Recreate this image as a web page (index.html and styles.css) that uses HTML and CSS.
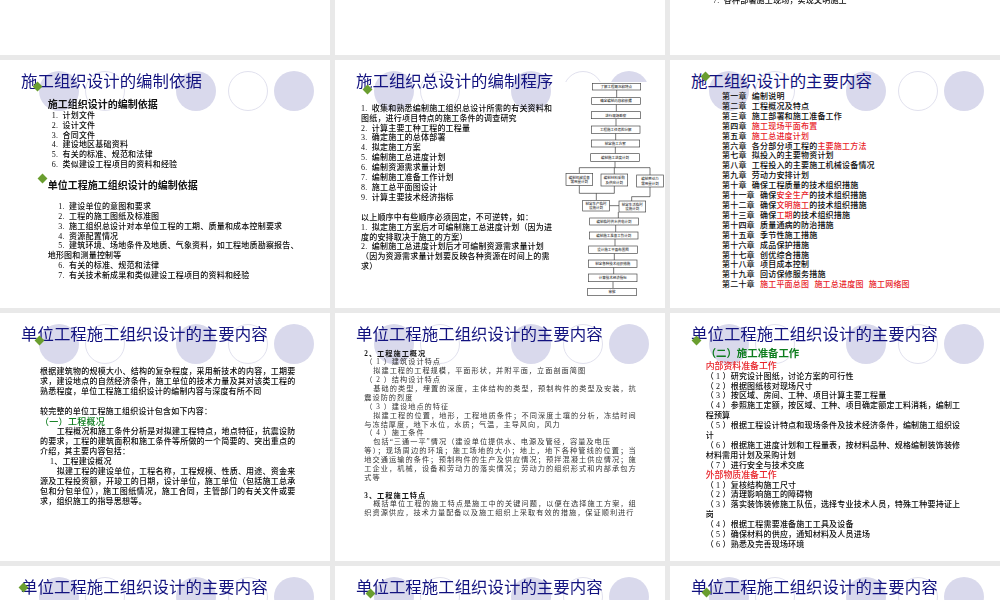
FILE: index.html
```html
<!DOCTYPE html>
<html lang="zh">
<head>
<meta charset="utf-8">
<title>施工组织设计</title>
<link rel="stylesheet" href="styles.css">
</head>
<body>
<main class="deck">
  <section class="slide"></section>
  <section class="slide"></section>
  <section class="slide"><p class="cut">7.&nbsp;&nbsp;各种部署施工现场，实现文明施工</p></section>

  <section class="slide">
    <div class="circles"><i></i><i></i><i></i><i></i><i></i></div>
    <h1>施工组织设计的编制依据</h1>
    <b class="dia d1a"></b><b class="dia d1b"></b>
    <div class="body b1">
      <h2>施工组织设计的编制依据</h2>
      <p class="in4">1.&nbsp;&nbsp;计划文件</p>
      <p class="in4">2.&nbsp;&nbsp;设计文件</p>
      <p class="in4">3.&nbsp;&nbsp;合同文件</p>
      <p class="in4">4.&nbsp;&nbsp;建设地区基础资料</p>
      <p class="in4">5.&nbsp;&nbsp;有关的标准、规范和法律</p>
      <p class="in4">6.&nbsp;&nbsp;类似建设工程项目的资料和经验</p>
      <h2 class="h2b">单位工程施工组织设计的编制依据</h2>
      <div class="list2">
        <p class="in10">1.&nbsp;&nbsp;建设单位的意图和要求</p>
        <p class="in10">2.&nbsp;&nbsp;工程的施工图纸及标准图</p>
        <p class="in10">3.&nbsp;&nbsp;施工组织总设计对本单位工程的工期、质量和成本控制要求</p>
        <p class="in10">4.&nbsp;&nbsp;资源配置情况</p>
        <p class="in10">5.&nbsp;&nbsp;建筑环境、场地条件及地质、气象资料，如工程地质勘察报告、地形图和测量控制等</p>
        <p class="in10">6.&nbsp;&nbsp;有关的标准、规范和法律</p>
        <p class="in10">7.&nbsp;&nbsp;有关技术新成果和类似建设工程项目的资料和经验</p>
      </div>
    </div>
  </section>

  <section class="slide">
    <div class="circles"><i></i><i></i><i></i><i></i><i></i></div>
    <h1>施工组织总设计的编制程序</h1>
    <b class="dia d2"></b>
    <div class="body b2">
      <p>1.&nbsp;&nbsp;收集和熟悉编制施工组织总设计所需的有关资料和图纸，进行项目特点的施工条件的调查研究</p>
      <p>2.&nbsp;&nbsp;计算主要工种工程的工程量</p>
      <p>3.&nbsp;&nbsp;确定施工的总体部署</p>
      <p>4.&nbsp;&nbsp;拟定施工方案</p>
      <p>5.&nbsp;&nbsp;编制施工总进度计划</p>
      <p>6.&nbsp;&nbsp;编制资源需求量计划</p>
      <p>7.&nbsp;&nbsp;编制施工准备工作计划</p>
      <p>8.&nbsp;&nbsp;施工总平面图设计</p>
      <p>9.&nbsp;&nbsp;计算主要技术经济指标</p>
      <p class="gap">以上顺序中有些顺序必须固定，不可逆转，如：</p>
      <p>1.&nbsp;&nbsp;拟定施工方案后才可编制施工总进度计划（因为进度的安排取决于施工的方案）</p>
      <p>2.&nbsp;&nbsp;编制施工总进度计划后才可编制资源需求量计划（因为资源需求量计划要反映各种资源在时间上的需求）</p>
    </div>
    <svg class="chart" viewBox="684 246 306 660" aria-label="编制程序流程图">
      <rect class="bg" x="684" y="246" width="306" height="660"/>
      <path class="ln" d="M845 270V293M844 313V335M843 356V378M842 400V420M841 441V461M840 484V503M733 520V503H945V525M838 503V522M733 556V580H838V558M784 580V601M945 561V590H890V603M823 617H852M850 636V654M842 675V696M840 717V738M838 760V780M836 802V822M834 845V865"/>
      <rect class="box" x="772" y="250" width="145" height="20"/>
      <rect class="box" x="770" y="293" width="146" height="20"/>
      <rect class="box" x="769" y="335" width="147" height="21"/>
      <rect class="box" x="769" y="378" width="146" height="22"/>
      <rect class="box" x="769" y="420" width="145" height="21"/>
      <rect class="box" x="767" y="461" width="146" height="23"/>
      <rect class="box" x="693" y="520" width="80" height="36"/>
      <rect class="box" x="798" y="522" width="80" height="36"/>
      <rect class="box" x="905" y="525" width="80" height="36"/>
      <rect class="box" x="743" y="601" width="80" height="32"/>
      <rect class="box" x="852" y="603" width="80" height="33"/>
      <rect class="box" x="764" y="654" width="146" height="21"/>
      <rect class="box" x="763" y="696" width="146" height="21"/>
      <rect class="box" x="761" y="738" width="146" height="22"/>
      <rect class="box" x="760" y="780" width="146" height="22"/>
      <rect class="box" x="760" y="822" width="146" height="23"/>
      <rect class="box" x="758" y="865" width="146" height="22"/>
      <text x="844" y="264">了解工程概况和特点</text>
      <text x="843" y="307">确定编制内容和依据</text>
      <text x="842" y="350">进行现场勘察</text>
      <text x="842" y="393">工程施工任务的分解</text>
      <text x="841" y="435">制定施工方案</text>
      <text x="840" y="477">编制施工进度计划</text>
      <text x="733" y="536">编制机械设备</text><text x="733" y="550">需用量计划</text>
      <text x="838" y="538">编制材料采购</text><text x="838" y="552">及供应计划</text>
      <text x="945" y="541">编制劳动力</text><text x="945" y="555">需用量计划</text>
      <text x="783" y="615">制定生产临时</text><text x="783" y="628">设施计划</text>
      <text x="892" y="617">制定生活临时</text><text x="892" y="630">设施计划</text>
      <text x="837" y="668">编制临时供水供电计划</text>
      <text x="836" y="710">编制施工准备工作计划</text>
      <text x="834" y="753">设计施工平面布置图</text>
      <text x="833" y="795">制定各种技术组织措施</text>
      <text x="833" y="838">计算技术经济指标</text>
      <text x="831" y="880">审批</text>
    </svg>
  </section>

  <section class="slide">
    <div class="circles"><i></i><i></i><i></i><i></i><i></i></div>
    <h1>施工组织设计的主要内容</h1>
    <b class="dia d3"></b>
    <div class="body b3">
      <p>第一章 编制说明</p>
      <p>第二章 工程概况及特点</p>
      <p>第三章 施工部署和施工准备工作</p>
      <p>第四章 <span class="red">施工现场平面布置</span></p>
      <p>第五章 <span class="red">施工总进度计划</span></p>
      <p>第六章 各分部分项工程的<span class="red">主要施工方法</span></p>
      <p>第七章 拟投入的主要物资计划</p>
      <p>第八章 工程投入的主要施工机械设备情况</p>
      <p>第九章 劳动力安排计划</p>
      <p>第十章 确保工程质量的技术组织措施</p>
      <p>第十一章 确保<span class="red">安全生产</span>的技术组织措施</p>
      <p>第十二章 确保<span class="red">文明施工</span>的技术组织措施</p>
      <p>第十三章 确保<span class="red">工期</span>的技术组织措施</p>
      <p>第十四章 质量通病的防治措施</p>
      <p>第十五章 季节性施工措施</p>
      <p>第十六章 成品保护措施</p>
      <p>第十七章 创优综合措施</p>
      <p>第十八章 项目成本控制</p>
      <p>第十九章 回访保修服务措施</p>
      <p>第二十章 <span class="red">施工平面总图 施工总进度图 施工网络图</span></p>
    </div>
  </section>

  <section class="slide">
    <div class="circles"><i></i><i></i><i></i><i></i><i></i></div>
    <h1>单位工程施工组织设计的主要内容</h1>
    <b class="dia d4"></b>
    <div class="body b4">
      <p>根据建筑物的规模大小、结构的复杂程度，采用新技术的内容，工期要求，建设地点的自然经济条件，施工单位的技术力量及其对该类工程的熟悉程度，单位工程施工组织设计的编制内容与深度有所不同</p>
      <p class="gap">较完整的单位工程施工组织设计包含如下内容：</p>
      <p class="green">（一）工程概况</p>
      <p class="para">工程概况和施工条件分析是对拟建工程特点，地点特征，抗震设防的要求，工程的建筑面积和施工条件等所做的一个简要的、突出重点的介绍，其主要内容包括：</p>
      <p class="sub">1、工程建设概况</p>
      <p class="para">拟建工程的建设单位，工程名称，工程规模、性质、用途、资金来源及工程投资额，开竣工的日期，设计单位，施工单位（包括施工总承包和分包单位），施工图纸情况，施工合同，主管部门的有关文件或要求，组织施工的指导思想等。</p>
    </div>
  </section>

  <section class="slide">
    <div class="circles"><i></i><i></i><i></i><i></i><i></i></div>
    <h1>单位工程施工组织设计的主要内容</h1>
    <div class="body b5">
      <p class="strong">2、工程施工概况</p>
      <p class="par">（ 1 ）建筑设计特点</p>
      <p class="ind">拟建工程的工程规模，平面形状，并附平面，立面剖面简图</p>
      <p class="par">（ 2 ）结构设计特点</p>
      <p class="ind">基础的类型，埋置的深度，主体结构的类型，预制构件的类型及安装，抗震设防的烈度</p>
      <p class="par">（ 3 ）建设地点的特征</p>
      <p class="ind">拟建工程的位置，地形，工程地质条件；不同深度土壤的分析，冻结时间与冻结厚度，地下水位，水质；气温，主导风向，风力</p>
      <p class="par">（ 4 ）施工条件</p>
      <p class="ind">包括“三通一平”情况（建设单位提供水、电源及管径，容量及电压</p>
      <p>等）；现场周边的环境；施工场地的大小；地上，地下各种管线的位置；当地交通运输的条件；预制构件的生产及供应情况；预拌混凝土供应情况；施工企业，机械，设备和劳动力的落实情况；劳动力的组织形式和内部承包方式等</p>
      <p class="strong gap5">3、工程施工特点</p>
      <p class="ind">概括单位工程的施工特点是施工中的关键问题，以便在选择施工方案，组织资源供应，技术力量配备以及施工组织上采取有效的措施，保证顺利进行</p>
    </div>
  </section>

  <section class="slide">
    <div class="circles"><i></i><i></i><i></i><i></i><i></i></div>
    <h1>单位工程施工组织设计的主要内容</h1>
    <b class="dia d6"></b>
    <div class="body b6">
      <h3>（二）施工准备工作</h3>
      <p class="redline">内部资料准备工作</p>
      <p>（ 1 ）研究设计图纸，讨论方案的可行性</p>
      <p>（ 2 ）根据图纸核对现场尺寸</p>
      <p>（ 3 ）按区域、房间、工种、项目计算主要工程量</p>
      <p>（ 4 ）参照施工定额，按区域、工种、项目确定额定工料消耗，编制工程预算</p>
      <p>（ 5 ）根据工程设计特点和现场条件及技术经济条件，编制施工组织设计</p>
      <p>（ 6 ）根据施工进度计划和工程量表，按材料品种、规格编制装饰装修材料需用计划及采购计划</p>
      <p>（ 7 ）进行安全与技术交底</p>
      <p class="redline">外部物质准备工作</p>
      <p>（ 1 ）复核结构施工尺寸</p>
      <p>（ 2 ）清理影响施工的障碍物</p>
      <p>（ 3 ）落实装饰装修施工队伍，选择专业技术人员，特殊工种要持证上岗</p>
      <p>（ 4 ）根据工程需要准备施工工具及设备</p>
      <p>（ 5 ）确保材料的供应，通知材料及人员进场</p>
      <p>（ 6 ）熟悉及完善现场环境</p>
    </div>
  </section>

  <section class="slide">
    <div class="circles"><i></i><i></i><i></i><i></i><i></i></div>
    <h1>单位工程施工组织设计的主要内容</h1>
    <b class="dia d7"></b>
  </section>
  <section class="slide">
    <div class="circles"><i></i><i></i><i></i><i></i><i></i></div>
    <h1>单位工程施工组织设计的主要内容</h1>
    <b class="dia d8"></b>
  </section>
  <section class="slide">
    <div class="circles"><i></i><i></i><i></i><i></i><i></i></div>
    <h1>单位工程施工组织设计的主要内容</h1>
    <b class="dia d9"></b>
  </section>
</main>
</body>
</html>
```
FILE: styles.css
```css
html, body {
  margin: 0;
  height: 100%;
  overflow: hidden;
  background: #e9e9e9;
}
.deck {
  display: grid;
  grid-template-columns: repeat(3, 330px);
  grid-template-rows: 54.5px 247.5px 247.5px 40px;
  column-gap: 5px;
  row-gap: 5.5px;
  filter: blur(0.35px);
  font-family: "Liberation Serif", "Noto Sans CJK SC", serif;
  font-size: 8px;
  font-weight: 500;
  line-height: 9.9px;
  letter-spacing: 0.2px;
  color: #0a0a0a;
}
.slide {
  position: relative;
  overflow: hidden;
  background: #fff;
  padding: 8px 0 0 21px;
  box-sizing: border-box;
}
p { margin: 0; }

.circles {
  position: absolute;
  top: 10.7px;
  left: 38.7px;
  display: flex;
}
.circles i {
  width: 40px;
  height: 40px;
  box-sizing: border-box;
  border-radius: 50%;
  background: #d9d9ec;
  flex: none;
}
.circles i:nth-child(2) { margin-left: 6.3px; background: #fff; border: 1px solid #e1e1ee; }
.circles i:nth-child(3) { margin-left: 50.6px; }
.circles i:nth-child(4) { margin-left: 12.4px; background: #fff; border: 1px solid #e1e1ee; }
.circles i:nth-child(5) { margin-left: 5.6px; }

h1 {
  position: relative;
  margin: 0;
  font-family: "Noto Sans CJK SC", sans-serif;
  font-size: 16.45px;
  font-weight: 400;
  line-height: 24px;
  letter-spacing: 0;
  color: #12127f;
  white-space: nowrap;
}
.dia {
  position: absolute;
  width: 7px;
  height: 7px;
  background: #6a9e2f;
  transform: rotate(45deg);
}
.d1a { left: 33.8px; top: 22.5px; }
.d1b { left: 39.2px; top: 115.2px; }
.d2 { left: 28.8px; top: 25.5px; }
.d3 { left: 32.2px; top: 13.2px; }
.d4 { left: 35.5px; top: 23.5px; }
.d6 { left: 23.2px; top: 23.5px; }
.d7 { left: 19.8px; top: 17.8px; }
.d8 { left: 31.5px; top: 23.5px; }
.d9 { left: 32.5px; top: 22.5px; }

.body { position: relative; }

.cut { margin: -12px 0 0 22px; }

.b1 { margin: 6.7px 0 0 26.7px; width: 252px; }
h2 {
  margin: 0;
  font-size: 10px;
  font-weight: 700;
  line-height: 12px;
  letter-spacing: 0;
  color: #111;
}
.h2b { margin-top: 10px; }
.in4 { text-indent: 4px; }
.in10 { text-indent: 10.6px; }
.list2 { margin-top: 9.7px; }

.b2 { margin: 11.75px 0 0 5px; width: 192px; }
.gap { margin-top: 9.9px; }

.chart {
  position: absolute;
  left: 228px;
  top: 22px;
  width: 102px;
  height: 220px;
}
.chart .bg { fill: #fff; }
.chart .ln { fill: none; stroke: #333; stroke-width: 2; }
.chart .box { fill: #fff; stroke: #444; stroke-width: 2; }
.chart text {
  font-family: "Noto Sans CJK SC", sans-serif;
  font-size: 10.5px;
  letter-spacing: 0;
  text-anchor: middle;
  fill: #333;
}

.b3 { margin: 0 0 0 31px; white-space: nowrap; word-spacing: 3px; }
.red { color: #e8242a; }

.b4 { margin: 22.3px 0 0 19px; width: 255.5px; line-height: 10px; text-align: justify; }
.b4 .gap { margin-top: 10px; }
.green { font-size: 9px; color: #0d7d1d; letter-spacing: 0.3px; }
.para { text-indent: 16.7px; }
.sub { text-indent: 10px; }

.b5 {
  margin: 4.6px 0 0 8.3px;
  width: 272.5px;
  font-size: 7.2px;
  font-weight: 400;
  letter-spacing: 1px;
  line-height: 8.87px;
  color: #333;
  text-align: justify;
}
.strong { font-weight: 700; color: #111; }
.par { text-indent: 1px; }
.ind { text-indent: 9px; }
.gap5 { margin-top: 8.87px; }

.b6 { margin: 3px 0 0 14.7px; width: 256px; }
h3 {
  margin: 0 0 1.7px 0;
  font-size: 10.4px;
  font-weight: 700;
  line-height: 12px;
  letter-spacing: 0;
  color: #0d7d1d;
}
.redline { font-size: 8.9px; letter-spacing: 0; color: #e8242a; }
```
